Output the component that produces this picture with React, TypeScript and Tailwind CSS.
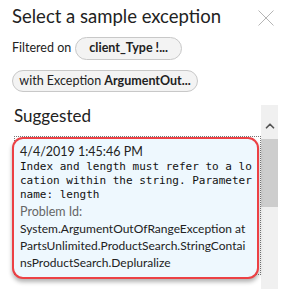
import { ChevronUp } from 'lucide-react';

const mono = ['Index and length must refer to a lo', 'cation within the string. Parameter', 'name: length'];
const stack = ['System.ArgumentOutOfRangeException at', 'PartsUnlimited.ProductSearch.StringContai', 'nsProductSearch.Depluralize'];

export default function App() {
    return (
        <div className="w-[287px] h-[289px] bg-white overflow-hidden text-[#222] font-['Lato',sans-serif]">
            <div className="flex items-start justify-between pl-3 pr-[13px] pt-[3px]">
                <h1 className="text-[18.5px] leading-[26px] text-[#222]">Select a sample exception</h1>
                <svg width="16" height="16" viewBox="0 0 16 16" className="mt-[7px]">
                    <path d="M0.5 0.5 L15.5 15.5 M15.5 0.5 L0.5 15.5" stroke="#b5b5b5" strokeWidth="1" />
                </svg>
            </div>
            <div className="flex items-center gap-[4px] pl-3 mt-[8px]">
                <span className="text-[12.5px]">Filtered on</span>
                <span className="h-[23px] w-[107px] flex items-center justify-center rounded-full border border-[#c8c8c8] bg-[#f3f3f3] text-[12.5px] font-bold">client_Type !...</span>
            </div>
            <div className="pl-3 mt-[7px]">
                <span className="inline-flex h-[22px] w-[186px] items-center justify-center rounded-full border border-[#c8c8c8] bg-[#f3f3f3] text-[12.5px]">
                    with Exception&nbsp;<b>ArgumentOut...</b>
                </span>
            </div>
            <div className="flex mt-[13px]">
                <div className="flex-1">
                    <h2 className="text-[17px] leading-[22px] pl-[14px]">Suggested</h2>
                    <div className="relative mt-[9px] h-[143px]">
                        <div className="absolute left-[14px] right-0 top-0 bottom-[4px] border border-dotted border-[#777]" />
                        <div className="absolute left-[12px] right-[2px] top-[1px] bottom-0 rounded-[11px] border-2 border-[#ec4145] bg-[#eef8fe] shadow-[0_3px_4px_rgba(0,0,0,0.3)] pl-[6px] pt-[5px] whitespace-nowrap">
                            <div className="text-[12.5px] leading-[16px]">4/4/2019 1:45:46 PM</div>
                            <div className="font-['DejaVu_Sans_Mono',monospace] text-[11px] leading-[14px] text-[#111]">
                                {mono.map(l => <div key={l}>{l}</div>)}
                            </div>
                            <div className="text-[12.5px] leading-[16px] mt-[2px] text-[#666]">Problem Id:</div>
                            <div className="text-[12px] leading-[17px]">
                                {stack.map(l => <div key={l}>{l}</div>)}
                            </div>
                        </div>
                    </div>
                </div>
                <div className="w-[17px] mr-[9px] h-[185px] bg-[#f0f0f0] flex flex-col items-center">
                    <ChevronUp className="w-[14px] h-[14px] mt-[14px] text-[#555]" strokeWidth={3} />
                    <div className="w-full h-[68px] mt-[6px] bg-[#cdcdcd]" />
                </div>
            </div>
        </div>
    );
}
